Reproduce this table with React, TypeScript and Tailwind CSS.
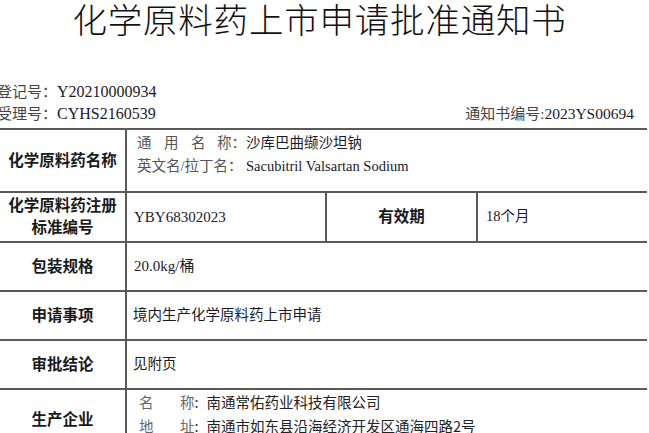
import React from 'react';

const serif = { fontFamily: '"Liberation Serif", "Noto Sans CJK SC", serif' };

const Label: React.FC<{ children: React.ReactNode; className?: string }> = ({ children, className = '' }) => (
  <div className={`w-[127px] shrink-0 border-r-2 border-[#5a5a5a] flex flex-col items-center justify-center text-[15.5px] font-bold text-[#1a1a1a] ${className}`}>
    {children}
  </div>
);

const App: React.FC = () => {
  return (
    <div className="w-[649px] h-[433px] overflow-hidden bg-white text-[#1a1a1a]" style={serif}>
      {/* Title */}
      <h1 className="h-[40px] pt-[2px] pr-[10px] text-center text-[34.5px] leading-[38px] font-light tracking-[0.8px] text-[#111]">
        化学原料药上市申请批准通知书
      </h1>

      {/* Meta lines */}
      <div className="mt-[41px] -ml-[3px] text-[15px] leading-[21px]">
        <div>
          <span className="text-[#444]">登记号：</span>
          <span className="text-[16px] text-[#1a1a2a]">Y20210000934</span>
        </div>
        <div className="flex justify-between pr-[15px]">
          <div>
            <span className="text-[#444]">受理号：</span>
            <span className="text-[16px] text-[#1a1a2a]">CYHS2160539</span>
          </div>
          <div>
            <span className="text-[#444]">通知书编号:</span>
            <span className="text-[15.5px] text-[#1a1a2a]">2023YS00694</span>
          </div>
        </div>
      </div>

      {/* Table */}
      <div className="mt-[3px] w-[647px] border-t-2 border-[#5a5a5a]">
        {/* Row 1 */}
        <div className="flex h-[61px]">
          <Label>化学原料药名称</Label>
          <div className="pl-[10px] pt-[2px] text-[14.5px] leading-[23px]">
            <div className="flex">
              <span className="w-[27px] text-[#555]">通</span>
              <span className="w-[27px] text-[#555]">用</span>
              <span className="w-[26px] text-[#555]">名</span>
              <span className="text-[#555]">称：</span>
              <span className="text-[#1a1a2a]">沙库巴曲缬沙坦钠</span>
            </div>
            <div className="flex">
              <span className="w-[109px] text-[#555]">英文名/拉丁名：</span>
              <span className="text-[14.5px] text-[#1a1a2a]">Sacubitril Valsartan Sodium</span>
            </div>
          </div>
        </div>

        {/* Row 2 */}
        <div className="flex h-[50px] border-t-2 border-[#5a5a5a]">
          <Label className="leading-[22px]">
            <span>化学原料药注册</span>
            <span>标准编号</span>
          </Label>
          <div className="w-[200px] shrink-0 border-r-2 border-[#5a5a5a] flex items-center pl-[7px] text-[15px] text-[#1a1a2a]">
            YBY68302023
          </div>
          <div className="w-[151px] shrink-0 border-r-2 border-[#5a5a5a] flex items-center justify-center text-[15.5px] font-bold">
            有效期
          </div>
          <div className="flex items-center pl-[8px] text-[14.5px] text-[#1a1a2a]">18个月</div>
        </div>

        {/* Row 3 */}
        <div className="flex h-[49px] border-t-2 border-[#5a5a5a]">
          <Label>包装规格</Label>
          <div className="flex items-center pl-[7px] text-[15px] text-[#1a1a2a]">20.0kg/桶</div>
        </div>

        {/* Row 4 */}
        <div className="flex h-[49px] border-t-2 border-[#5a5a5a]">
          <Label>申请事项</Label>
          <div className="flex items-center pl-[6px] text-[14.5px] text-[#1a1a2a]">境内生产化学原料药上市申请</div>
        </div>

        {/* Row 5 */}
        <div className="flex h-[49px] border-t-2 border-[#5a5a5a]">
          <Label>审批结论</Label>
          <div className="flex items-center pl-[6px] text-[14.5px] text-[#1a1a2a]">见附页</div>
        </div>

        {/* Row 6 */}
        <div className="flex h-[62px] border-t-2 border-[#5a5a5a]">
          <Label>生产企业</Label>
          <div className="pl-[12px] text-[14.5px] leading-[24px]" style={{ fontFamily: '"Noto Sans CJK SC", sans-serif' }}>
            <div className="flex">
              <span className="w-[41px] text-[#666]">名</span>
              <span className="text-[#666]">称</span>
              <span className="w-[12px] text-[#333]">:</span>
              <span className="text-[#222]">南通常佑药业科技有限公司</span>
            </div>
            <div className="flex">
              <span className="w-[41px] text-[#666]">地</span>
              <span className="text-[#666]">址</span>
              <span className="w-[12px] text-[#333]">:</span>
              <span className="text-[#222]">南通市如东县沿海经济开发区通海四路2号</span>
            </div>
          </div>
        </div>
      </div>
    </div>
  );
};

export default App;
